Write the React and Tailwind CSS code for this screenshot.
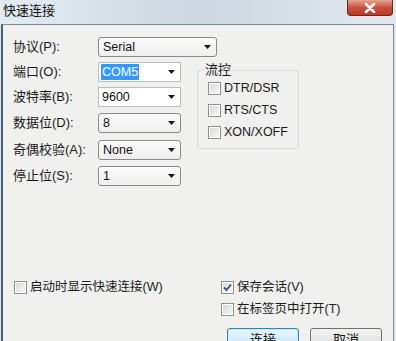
import React from "react";

const font = { fontFamily: '"Liberation Sans", "Noto Sans CJK SC", sans-serif' };

function Arrow() {
  return (
    <svg width="7" height="4" viewBox="0 0 7 4" className="shrink-0">
      <path d="M0 0H7L3.5 4Z" fill="#1a1a1a" />
    </svg>
  );
}

function DropList({ value, width }) {
  return (
    <div
      className={`${width} h-[20px] flex items-center justify-between pl-[4px] pr-[5px] rounded-[3px] border border-[#8a8a8a] bg-gradient-to-b from-[#fbfbfb] to-[#efefef] text-[12.5px] text-[#111]`}
    >
      <span>{value}</span>
      <Arrow />
    </div>
  );
}

function Combo({ value, selected }) {
  return (
    <div className="w-[83px] h-[20px] flex items-center justify-between pl-[2px] pr-[5px] border border-[#b9bcc2] bg-white text-[12.5px] text-[#111]">
      {selected ? (
        <span className="bg-[#3399ff] text-white px-[1px] leading-[16px]">{value}</span>
      ) : (
        <span className="pl-[1px]">{value}</span>
      )}
      <Arrow />
    </div>
  );
}

function Check({ checked }) {
  return (
    <div className="w-[13px] h-[13px] border border-[#8e8f8f] bg-white p-[1px] shrink-0">
      <div className="w-full h-full bg-gradient-to-br from-[#d9dadb] to-[#f6f6f6] flex items-center justify-center">
        {checked && (
          <svg width="9" height="9" viewBox="0 0 9 9">
            <path d="M1 4.5L3.5 7L8 1.5" stroke="#3b4d72" strokeWidth="1.8" fill="none" />
          </svg>
        )}
      </div>
    </div>
  );
}

function CheckRow({ label, checked }) {
  return (
    <div className="flex items-center gap-[3px] text-[12.5px] text-[#1a1a1a] h-[14px]">
      <Check checked={checked} />
      <span>{label}</span>
    </div>
  );
}

function Label({ children }) {
  return <div className="w-[85px] text-[13px] text-[#1a1a1a]">{children}</div>;
}

export default function App() {
  return (
    <div className="w-[396px] h-[341px] overflow-hidden flex flex-col bg-[#dfe6ee]" style={font}>
      {/* title bar */}
      <div className="h-[24px] shrink-0 flex justify-between bg-gradient-to-r from-[#e4ebf2] via-[#cdd7e1] to-[#e2e8ef]">
        <div className="pl-[3px] pt-[2px] text-[13px] text-[#111] leading-[18px]">快速连接</div>
        <div className="mr-[3px] w-[46px] h-[16px] rounded-b-[4px] border border-t-0 border-[#6a2a22] bg-gradient-to-b from-[#e7a393] via-[#c9503e] to-[#b83a28] flex items-center justify-center">
          <svg width="12" height="10" viewBox="0 0 12 10">
            <path d="M2 1L10 9M10 1L2 9" stroke="#fff" strokeWidth="2.6" strokeLinecap="round" />
          </svg>
        </div>
      </div>
      {/* client */}
      <div className="flex-1 flex ml-[1px] mr-[2px]">
        <div className="flex-1 border-l-2 border-l-[#4d5d73] border-t border-t-[#7d8896] border-r border-r-[#7d8896] bg-[#f0f0ef] pl-[10px] pr-[10px] pt-[12px]">
          <div className="flex items-center">
            <Label>协议(P):</Label>
            <DropList value="Serial" width="w-[119px]" />
          </div>
          <div className="flex">
            <div className="flex flex-col">
              <div className="flex items-center mt-[5px]">
                <Label>端口(O):</Label>
                <Combo value="COM5" selected />
              </div>
              <div className="flex items-center mt-[5px]">
                <Label>波特率(B):</Label>
                <Combo value="9600" />
              </div>
              <div className="flex items-center mt-[6px]">
                <Label>数据位(D):</Label>
                <DropList value="8" width="w-[83px]" />
              </div>
              <div className="flex items-center mt-[7px]">
                <Label>奇偶校验(A):</Label>
                <DropList value="None" width="w-[83px]" />
              </div>
              <div className="flex items-center mt-[6px]">
                <Label>停止位(S):</Label>
                <DropList value="1" width="w-[83px]" />
              </div>
            </div>
            <fieldset className="ml-[16px] mt-[5px] w-[97px] h-[87px] border border-[#d5dfe5] rounded-[3px] px-[10px] pb-[6px]">
              <legend className="px-[1px] ml-[-4px] text-[13px] text-[#1a1a1a] leading-[16px]">流控</legend>
              <div className="flex flex-col gap-[8px] mt-[3px]">
                <CheckRow label="DTR/DSR" />
                <CheckRow label="RTS/CTS" />
                <CheckRow label="XON/XOFF" />
              </div>
            </fieldset>
          </div>
          <div className="flex mt-[94px]">
            <div className="ml-[1px] w-[207px]">
              <CheckRow label="启动时显示快速连接(W)" />
            </div>
            <div className="flex flex-col">
              <CheckRow label="保存会话(V)" checked />
              <div className="mt-[8px]">
                <CheckRow label="在标签页中打开(T)" />
              </div>
              <div className="flex gap-[11px] mt-[12px] ml-[6px]">
                <div className="w-[72px] h-[23px] rounded-[3px] border border-[#3c7fb1] bg-gradient-to-b from-[#eaf6fd] to-[#bee6fd] shadow-[inset_0_0_0_1px_#c8ecfd] flex items-center justify-center text-[13px] text-[#111]">
                  连接
                </div>
                <div className="w-[72px] h-[23px] rounded-[3px] border border-[#707070] bg-gradient-to-b from-[#f2f2f2] to-[#dcdcdc] flex items-center justify-center text-[13px] text-[#111]">
                  取消
                </div>
              </div>
            </div>
          </div>
        </div>
      </div>
    </div>
  );
}
